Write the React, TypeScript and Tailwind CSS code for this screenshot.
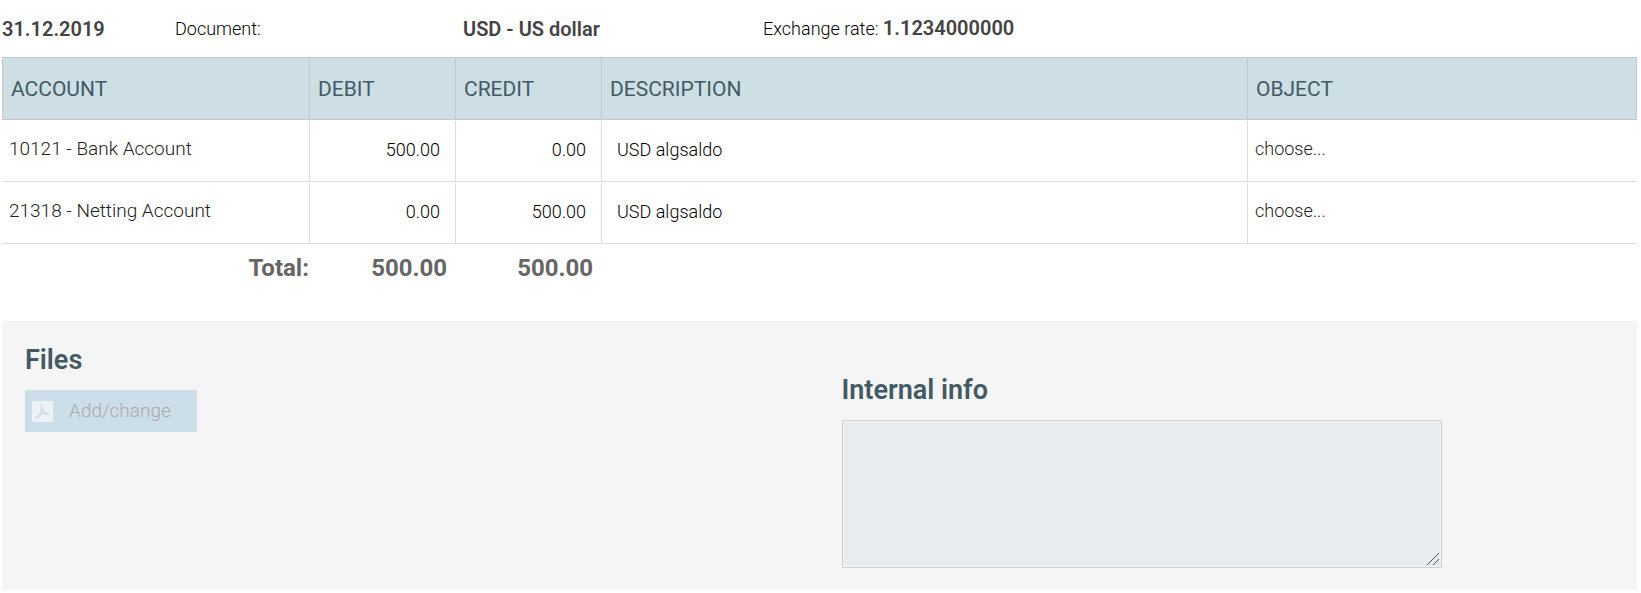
import React from "react";

type Entry = {
  account: string;
  debit: string;
  credit: string;
  description: string;
};

const entries: Entry[] = [
  { account: "10121 - Bank Account", debit: "500.00", credit: "0.00", description: "USD algsaldo" },
  { account: "21318 - Netting Account", debit: "0.00", credit: "500.00", description: "USD algsaldo" },
];

const headings = ["Account", "Debit", "Credit", "Description", "Object"];

function PdfIcon() {
  return (
    <svg viewBox="0 0 21 21" className="size-[21px] shrink-0" aria-hidden="true">
      <rect width="21" height="21" rx="1.5" fill="#edf2f6" />
      <g fill="none" stroke="#ccdeea" strokeLinecap="round" strokeLinejoin="round">
        <path strokeWidth="1.8" d="M9.6 4.2C10.6 6 10.2 8 9 11.2 7.7 14.2 6 16.6 4.2 17" />
        <path strokeWidth="1.8" d="M9.9 7.5c.8 3 3 5 6.9 5.7" />
        <path strokeWidth="1.4" d="M6.8 14c2.8-1.2 6.5-2 10-1.2" />
      </g>
    </svg>
  );
}

function Cell({ first, children }: { first?: boolean; children: React.ReactNode }) {
  return (
    <td className="border-b border-[#dcdcdc] p-0 pt-px">
      <div className={first ? "flex h-[60px] items-center px-[7px] pb-1 text-[19px] font-light" : "flex h-[60px] items-center border-l border-[#dcdcdc] px-[7px] pb-1"}>
        {children}
      </div>
    </td>
  );
}

function EntryRow({ entry, index }: { entry: Entry; index: number }) {
  const n = index + 1;
  return (
    <tr>
      <Cell first>{entry.account}</Cell>
      <Cell>
        <input aria-label={`Debit, row ${n}`} defaultValue={entry.debit} className="mt-0.5 w-full bg-transparent px-2 text-right text-black outline-none" />
      </Cell>
      <Cell>
        <input aria-label={`Credit, row ${n}`} defaultValue={entry.credit} className="mt-0.5 w-full bg-transparent px-2 text-right text-black outline-none" />
      </Cell>
      <Cell>
        <input aria-label={`Description, row ${n}`} defaultValue={entry.description} className="mt-0.5 w-full bg-transparent px-2 text-black outline-none" />
      </Cell>
      <Cell>
        <a href="#object">choose...</a>
      </Cell>
    </tr>
  );
}

export default function App() {
  return (
    <main className="bg-white pr-1 pl-0.5 font-['Roboto',sans-serif] text-lg font-[350] text-black">
      <header className="grid h-[57px] grid-cols-[173px_288px_300px_1fr] items-center">
        <strong className="text-xl leading-6 font-semibold text-[#444]">31.12.2019</strong>
        <span>Document:</span>
        <strong className="text-xl leading-6 font-semibold text-[#444]">USD - US dollar</strong>
        <span>
          Exchange rate: <strong className="text-xl leading-6 font-semibold text-[#444]">1.1234000000</strong>
        </span>
      </header>

      <table className="w-full table-fixed border-separate border-spacing-0 text-[#222]">
        <colgroup>
          <col className="w-[307px]" />
          <col className="w-[146px]" />
          <col className="w-[146px]" />
          <col />
          <col className="w-[390px]" />
        </colgroup>
        <thead>
          <tr>
            {headings.map((heading) => (
              <th
                key={heading}
                scope="col"
                className="h-[63px] border-y border-l border-[#c4c8ca] bg-[#cddee4] px-2 pt-0.5 text-left text-[21px] font-normal text-[#435a65] uppercase last:border-r"
              >
                {heading}
              </th>
            ))}
          </tr>
        </thead>
        <tbody>
          {entries.map((entry, index) => (
            <EntryRow key={entry.account} entry={entry} index={index} />
          ))}
        </tbody>
        <tfoot>
          <tr className="text-right text-2xl font-bold text-[#666]">
            <th scope="row" className="h-12 p-0 text-right">Total:</th>
            <td className="p-0 pr-2">500.00</td>
            <td className="p-0 pr-2">500.00</td>
            <td colSpan={2}></td>
          </tr>
        </tfoot>
      </table>

      <section className="mt-[29px] grid grid-cols-2 bg-[#f5f5f5] pb-[22px] text-[#435a65]">
        <div className="pt-[23px] pl-[23px]">
          <h2 className="text-[27px] leading-8 font-semibold">Files</h2>
          <button type="button" disabled className="mt-3.5 flex h-[42px] w-[172px] items-center bg-[#ccdeea] pl-[7px] text-[19px] font-light text-[#aaa]">
            <PdfIcon />
            <span className="ml-4">Add/change</span>
          </button>
        </div>
        <div className="pt-[53px] pl-[22px]">
          <label htmlFor="internal-info" className="block text-[27px] leading-8 font-semibold">Internal info</label>
          <div className="relative mt-3.5 w-[600px] max-w-full">
            <textarea
              id="internal-info"
              className="block h-[148px] w-full resize-none border border-[#ccd0d4] bg-[#e8ecef] p-2 text-[#333] inset-ring inset-ring-[#f4f4f4] outline-none"
            />
            <svg viewBox="0 0 12 12" className="pointer-events-none absolute right-[3px] bottom-[3px] size-3" aria-hidden="true">
              <path d="M0 12 12 0M6 12l6-6" stroke="#444" strokeWidth="0.9" />
            </svg>
          </div>
        </div>
      </section>
    </main>
  );
}
